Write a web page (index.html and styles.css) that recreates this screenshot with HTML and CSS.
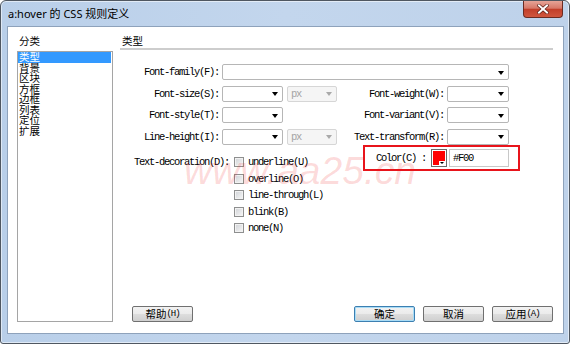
FILE: index.html
```html
<!DOCTYPE html>
<html lang="zh-CN">
<head>
    <meta charset="UTF-8">
    <meta name="viewport" content="width=device-width, initial-scale=1.0">
    <title>a:hover 的 CSS 规则定义</title>
    <link rel="stylesheet" href="styles.css">
</head>
<body>
    <div class="window">
        <div class="titlebar">
            <span class="title">a:hover 的 CSS 规则定义</span>
            <span class="close">
                <svg width="12" height="10" viewBox="0 0 12 10">
                    <path d="M2 1.5 L10 8.5 M10 1.5 L2 8.5" stroke="#5a1d14" stroke-width="3.4" stroke-linecap="square"/>
                    <path d="M2 1.5 L10 8.5 M10 1.5 L2 8.5" stroke="#fff" stroke-width="2" stroke-linecap="square"/>
                </svg>
            </span>
        </div>
        <div class="client">
            <div class="side">
                <div class="side-title">分类</div>
                <ul class="cat-list">
                    <li><span class="sel">类型</span></li>
                    <li>背景</li>
                    <li>区块</li>
                    <li>方框</li>
                    <li>边框</li>
                    <li>列表</li>
                    <li>定位</li>
                    <li>扩展</li>
                </ul>
            </div>
            <div class="main">
                <div class="main-title">类型</div>
                <div class="form-grid">
                    <div class="lbl">Font-family(F):</div>
                    <div class="combo wide"></div>

                    <div class="lbl">Font-size(S):</div>
                    <div class="combo small"></div>
                    <div class="combo off"><span>px</span></div>
                    <div class="lbl">Font-weight(W):</div>
                    <div class="combo"></div>

                    <div class="lbl">Font-style(T):</div>
                    <div class="combo small"></div>
                    <div class="lbl col4">Font-variant(V):</div>
                    <div class="combo"></div>

                    <div class="lbl">Line-height(I):</div>
                    <div class="combo small"></div>
                    <div class="combo off"><span>px</span></div>
                    <div class="lbl">Text-transform(R):</div>
                    <div class="combo"></div>
                </div>
                <div class="lower">
                    <div class="deco-label">Text-decoration(D):</div>
                    <div class="checks">
                        <div class="check"><span class="box"></span>underline(U)</div>
                        <div class="check"><span class="box"></span>overline(O)</div>
                        <div class="check"><span class="box"></span>line-through(L)</div>
                        <div class="check"><span class="box"></span>blink(B)</div>
                        <div class="check"><span class="box"></span>none(N)</div>
                    </div>
                    <div class="color-box">
                        <span class="color-label">Color(C) :</span>
                        <span class="swatch"><span class="fill"></span><span class="drop"></span></span>
                        <span class="hex">#F00</span>
                    </div>
                </div>
                <div class="buttons">
                    <div class="btn">帮助<span class="mono">(H)</span></div>
                    <div class="btn ok">确定</div>
                    <div class="btn">取消</div>
                    <div class="btn">应用<span class="mono">(A)</span></div>
                </div>
            </div>
        </div>
        <div class="watermark">www.aa25.cn</div>
    </div>
</body>
</html>
```
FILE: styles.css
```css
* {
    box-sizing: border-box;
}
body {
    margin: 0;
    background: #fff;
    color: #000;
    font-family: "Noto Sans CJK SC", "Noto Sans", sans-serif;
    font-size: 10.5px;
}
.window {
    position: relative;
    width: 570px;
    height: 344px;
    border: 1px solid #4f5761;
    border-radius: 6px 6px 3px 3px;
    background: linear-gradient(to right, #b9cfe9 0, #c3d6ed 50%, #bed2ea 100%);
    box-shadow: inset 0 0 0 1px rgba(255, 255, 255, 0.55);
    display: flex;
    flex-direction: column;
}
.titlebar {
    height: 25px;
    display: flex;
    align-items: flex-start;
}
.title {
    margin: 6px 0 0 7px;
    font-family: "Noto Sans", "Noto Sans CJK SC", sans-serif;
    font-size: 11px;
    line-height: 13px;
}
.close {
    margin: 0 6px 0 auto;
    width: 40px;
    height: 17px;
    border: 1px solid #6b2b22;
    border-top: none;
    border-radius: 0 0 4px 4px;
    background: linear-gradient(#e6a497 0, #d77868 45%, #c23f2a 52%, #d0563e 100%);
    display: flex;
    align-items: center;
    justify-content: center;
}
.client {
    flex: 1;
    margin: 0 5px 9px 6px;
    border: 1px solid #8ea2bb;
    background: #fff;
    display: flex;
    gap: 7px;
    padding: 7px 10px 11px 9px;
}
.side {
    width: 96px;
    display: flex;
    flex-direction: column;
}
.side-title {
    height: 14px;
    line-height: 14px;
    padding-left: 2px;
    margin-bottom: 3px;
}
.cat-list {
    flex: 1;
    margin: 0;
    padding: 0;
    list-style: none;
    border: 1px solid #a5a5a5;
}
.cat-list li {
    height: 10.5px;
    line-height: 10.5px;
    padding-left: 1px;
    overflow: visible;
}
.sel {
    display: block;
    margin: 0 1px 0 -1px;
    padding-left: 1px;
    background: #3399ff;
    color: #fff;
}
.main {
    flex: 1;
    display: flex;
    flex-direction: column;
}
.main-title {
    height: 16px;
    line-height: 14px;
    padding-left: 2px;
    border-bottom: 2px solid #cdcdcd;
}
.lbl, .deco-label, .check, .color-label, .hex, .combo span, .mono {
    font-family: "Liberation Mono", monospace;
    font-size: 10.5px;
    letter-spacing: -1.3px;
}
.form-grid {
    margin-top: 14px;
    display: grid;
    grid-template-columns: 102px 65px 50px 110px 62px;
    grid-auto-rows: 16px;
    row-gap: 5.5px;
}
.lbl {
    text-align: right;
    padding-right: 3px;
    align-self: center;
    line-height: 12px;
}
.form-grid .col4 {
    grid-column: 4;
}
.combo {
    border: 1px solid #b6b6b6;
    border-radius: 2px;
    background: #fff;
    display: flex;
    align-items: center;
    justify-content: flex-end;
    padding: 1px 4px 0 3px;
}
.combo::after {
    content: "";
    border-left: 3.5px solid transparent;
    border-right: 3.5px solid transparent;
    border-top: 4px solid #000;
}
.combo.wide {
    grid-column: 2 / 6;
}
.combo.small {
    width: 61px;
}
.combo.off {
    justify-content: space-between;
    border-color: #d6d6d6;
    background: #f5f5f5;
    color: #a4a4a4;
}
.combo.off::after {
    border-top-color: #a9a9a9;
}
.lower {
    display: flex;
    align-items: flex-start;
    margin-top: 0.5px;
}
.deco-label {
    width: 111px;
    margin-top: 9px;
    padding-right: 2px;
    text-align: right;
    line-height: 16.5px;
}
.checks {
    margin: 9px 0 0 3px;
    display: flex;
    flex-direction: column;
}
.check {
    height: 16.5px;
    display: flex;
    align-items: center;
    gap: 4px;
}
.box {
    width: 10px;
    height: 10px;
    border: 1px solid #8e8f8f;
    background: linear-gradient(135deg, #cfd2d6, #f7f7f7);
    box-shadow: inset 0 0 0 1px #f2f2f2;
}
.color-box {
    margin: 0 33px 0 auto;
    width: 157px;
    height: 26px;
    border: 2px solid #e8141b;
    display: flex;
    align-items: center;
    padding-left: 11px;
}
.swatch {
    position: relative;
    margin-left: 5px;
    width: 16px;
    height: 18px;
    border: 1px solid #6a6a6a;
    padding: 1px;
    background: #fff;
}
.fill {
    display: block;
    height: 100%;
    background: #ff0000;
}
.drop {
    position: absolute;
    right: 1px;
    bottom: 1px;
    width: 6px;
    height: 4px;
    background: #fff;
}
.drop::after {
    content: "";
    position: absolute;
    left: 1px;
    top: 1px;
    border-left: 2px solid transparent;
    border-right: 2px solid transparent;
    border-top: 2px solid #000;
}
.hex {
    margin-left: 2px;
    width: 60px;
    height: 18px;
    border: 1px solid #c8c8c8;
    padding-left: 3px;
    line-height: 16px;
}
.buttons {
    margin-top: auto;
    display: flex;
    gap: 8px;
    padding-left: 12px;
}
.btn {
    width: 61px;
    height: 16px;
    border: 1px solid #707070;
    border-radius: 2px;
    background: linear-gradient(#f2f2f2 0, #ebebeb 48%, #dddddd 52%, #cfcfcf 100%);
    display: flex;
    align-items: center;
    justify-content: center;
    line-height: 14px;
}
.btn .mono {
    font-size: 9px;
    letter-spacing: -1px;
}
.btn.ok {
    margin-left: auto;
    border-color: #3c7fb1;
    box-shadow: inset 0 0 0 1px #a9dcf6;
}
.watermark {
    position: absolute;
    left: 183px;
    top: 150px;
    font-family: "Liberation Sans", sans-serif;
    font-style: italic;
    font-size: 39px;
    line-height: 1;
    color: rgba(240, 30, 30, 0.17);
    pointer-events: none;
}
```
